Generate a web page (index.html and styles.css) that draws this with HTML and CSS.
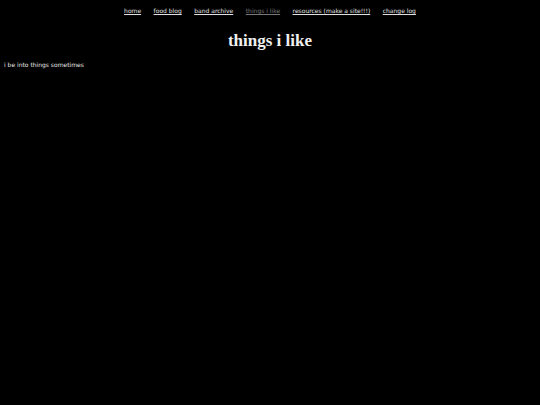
FILE: index.html
```html
<!DOCTYPE html>
<html>
<head>
<meta charset="utf-8">
<link rel="stylesheet" href="styles.css">
</head>
<body>
<nav class="nav">
  <a href="#">home</a>
  <a href="#">food blog</a>
  <a href="#">band archive</a>
  <a href="#" class="current">things i like</a>
  <a href="#">resources (make a site!!!)</a>
  <a href="#">change log</a>
</nav>
<h1 class="title">things i like</h1>
<p class="intro">i be into things sometimes</p>
</body>
</html>
```
FILE: styles.css
```css
html, body { background: #000; }
body {
  margin: 0;
  padding: 0 4px;
  color: #e8e8e8;
  font-family: "DejaVu Sans", sans-serif;
  font-size: 6px;
}
.nav {
  display: flex;
  justify-content: center;
  gap: 12.5px;
  padding-top: 6px;
  line-height: 9px;
}
.nav a {
  color: #e0e0e0;
  text-decoration: underline;
}
.nav a.current { color: #777; }
.title {
  margin: 16px 0 0;
  text-align: center;
  font-family: "Liberation Serif", serif;
  font-weight: bold;
  font-size: 17px;
  line-height: 20px;
  color: #f0f0f0;
}
.intro {
  margin: 9px 0 0;
  line-height: 9px;
}
```
